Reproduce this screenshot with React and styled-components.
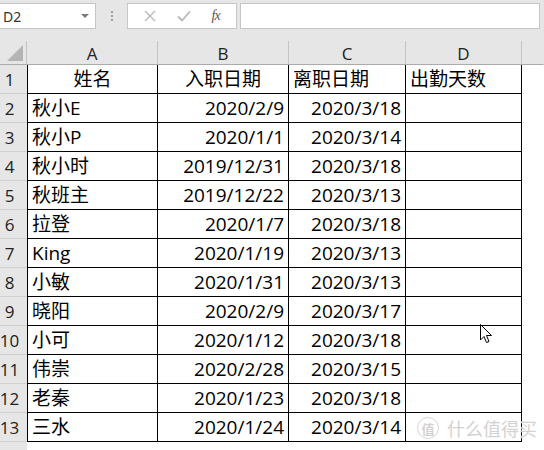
import React from 'react';
import styled, { createGlobalStyle } from 'styled-components';

const GlobalStyle = createGlobalStyle`
  html, body {
    margin: 0;
    padding: 0;
    background: #ffffff;
  }
  body {
    font-family: 'Open Sans', 'Noto Sans CJK SC', sans-serif;
  }
`;

const COLS = ['A', 'B', 'C', 'D'];

const ROWS = [
  ['秋小E', '2020/2/9', '2020/3/18'],
  ['秋小P', '2020/1/1', '2020/3/14'],
  ['秋小时', '2019/12/31', '2020/3/18'],
  ['秋班主', '2019/12/22', '2020/3/13'],
  ['拉登', '2020/1/7', '2020/3/18'],
  ['King', '2020/1/19', '2020/3/13'],
  ['小敏', '2020/1/31', '2020/3/13'],
  ['晓阳', '2020/2/9', '2020/3/17'],
  ['小可', '2020/1/12', '2020/3/18'],
  ['伟崇', '2020/2/28', '2020/3/15'],
  ['老秦', '2020/1/23', '2020/3/18'],
  ['三水', '2020/1/24', '2020/3/14'],
];

const Window = styled.div`
  position: relative;
  width: 544px;
  height: 450px;
  overflow: hidden;
  background: #ffffff;
`;

const FormulaBar = styled.div`
  display: flex;
  align-items: stretch;
  height: 26px;
  padding: 3px 4px 12px 0;
  background: #e6e6e6;
`;

const NameBox = styled.div`
  display: flex;
  align-items: center;
  justify-content: space-between;
  width: 96px;
  box-sizing: border-box;
  padding: 0 6px 0 3px;
  background: #ffffff;
  border: 1px solid #c6c6c6;
  border-left: none;
  font-family: 'Noto Sans', sans-serif;
  font-size: 14px;
  color: #333;
`;

const DropArrow = styled.span`
  width: 0;
  height: 0;
  border-left: 4px solid transparent;
  border-right: 4px solid transparent;
  border-top: 4px solid #7a7a7a;
`;

const Grip = styled.div`
  width: 31px;
  display: flex;
  flex-direction: column;
  align-items: center;
  justify-content: center;
  gap: 2px;
  & span {
    width: 2px;
    height: 2px;
    background: #a0a0a0;
  }
`;

const ToolBox = styled.div`
  display: flex;
  align-items: center;
  justify-content: space-around;
  width: 110px;
  box-sizing: border-box;
  padding: 0 6px;
  background: #ffffff;
  border: 1px solid #c6c6c6;
  margin-right: 3px;
`;

const Fx = styled.span`
  font-family: 'Liberation Serif', serif;
  font-style: italic;
  font-size: 14px;
  color: #555;
  letter-spacing: -1px;
`;

const FormulaInput = styled.div`
  flex: 1;
  background: #ffffff;
  border: 1px solid #c6c6c6;
`;

const Sheet = styled.div`
  display: grid;
  grid-template-columns: 27px 131px 131px 117px 116px 1fr;
  grid-template-rows: 24px;
  grid-auto-rows: 29px;
`;

const Corner = styled.div`
  position: relative;
  background: #e6e6e6;
  border-right: 1px solid #c4c4c4;
  border-bottom: 1px solid #ababab;
  &::after {
    content: '';
    position: absolute;
    right: 3px;
    bottom: 3px;
    width: 0;
    height: 0;
    border-left: 16px solid transparent;
    border-bottom: 16px solid #b4b4b4;
  }
`;

const ColHead = styled.div`
  display: flex;
  align-items: center;
  justify-content: center;
  padding-top: 2px;
  background: #e6e6e6;
  border-right: 1px solid ${(p) => (p.$last ? 'transparent' : '#c4c4c4')};
  border-bottom: 1px solid #ababab;
  font-family: 'Open Sans', sans-serif;
  font-size: 17px;
  color: #222;
`;

const RowHead = styled.div`
  display: flex;
  align-items: center;
  justify-content: center;
  padding-right: 8px;
  background: #e6e6e6;
  border-bottom: 1px solid #d0d0d0;
  font-family: 'Open Sans', sans-serif;
  font-size: 17px;
  color: #222;
`;

const Cell = styled.div`
  display: flex;
  align-items: center;
  justify-content: ${(p) =>
    p.$align === 'right' ? 'flex-end' : p.$align === 'center' ? 'center' : 'flex-start'};
  padding: 0 4px;
  overflow: hidden;
  white-space: nowrap;
  border-right: 1px solid #000;
  border-bottom: 1px solid #000;
  border-left: ${(p) => (p.$first ? '1px solid #000' : 'none')};
  font-family: 'Open Sans', 'Noto Sans CJK SC', sans-serif;
  font-size: 19px;
  line-height: 1;
  color: #000;
`;

const Blank = styled.div`
  background: #ffffff;
`;

const Watermark = styled.div`
  position: absolute;
  left: 417px;
  top: 417px;
  display: flex;
  align-items: center;
  gap: 8px;
  color: #d2d2d2;
  font-family: 'Noto Sans CJK SC', sans-serif;
  font-size: 18px;
  line-height: 1;
  text-shadow: 0 0 2px #fff, 0 0 1px #fff;
`;

const Badge = styled.span`
  display: flex;
  align-items: center;
  justify-content: center;
  width: 20px;
  height: 20px;
  border: 1.5px solid #d6d6d6;
  border-radius: 50%;
  font-size: 13px;
  font-weight: bold;
`;

const Pointer = styled.svg`
  position: absolute;
  left: 480px;
  top: 324px;
`;

const header = [
  ['姓名', 'center'],
  ['入职日期', 'center'],
  ['离职日期', 'left'],
  ['出勤天数', 'left'],
];

export default function App() {
  return (
    <Window>
      <GlobalStyle />
      <FormulaBar>
        <NameBox>
          D2
          <DropArrow />
        </NameBox>
        <Grip>
          <span />
          <span />
          <span />
        </Grip>
        <ToolBox>
          <svg width="12" height="12" viewBox="0 0 12 12">
            <path d="M1 1 L11 11 M11 1 L1 11" stroke="#b8b8b8" strokeWidth="1.3" fill="none" />
          </svg>
          <svg width="14" height="12" viewBox="0 0 14 12">
            <path d="M1 6.5 L5 10.5 L13 1.5" stroke="#b8b8b8" strokeWidth="1.8" fill="none" />
          </svg>
          <Fx>fx</Fx>
        </ToolBox>
        <FormulaInput />
      </FormulaBar>

      <Sheet>
        <Corner />
        {COLS.map((c) => (
          <ColHead key={c}>{c}</ColHead>
        ))}
        <ColHead $last />

        <RowHead>1</RowHead>
        {header.map(([t, a], i) => (
          <Cell key={t} $first={i === 0} $align={a}>
            {t}
          </Cell>
        ))}
        <Blank />

        {ROWS.map((r, i) => (
          <React.Fragment key={i}>
            <RowHead>{i + 2}</RowHead>
            <Cell $first>{r[0]}</Cell>
            <Cell $align="right">{r[1]}</Cell>
            <Cell $align="right">{r[2]}</Cell>
            <Cell />
            <Blank />
          </React.Fragment>
        ))}

        <RowHead />
        <Blank />
        <Blank />
        <Blank />
        <Blank />
        <Blank />
      </Sheet>

      <Watermark>
        <Badge>值</Badge>
        什么值得买
      </Watermark>

      <Pointer width="13" height="21" viewBox="0 0 13 21">
        <path
          d="M0.5 0.5 L0.5 16 L4 12.5 L6.5 18.5 L9 17.5 L6.5 11.5 L11.5 11.5 Z"
          fill="#fff"
          stroke="#000"
          strokeWidth="1"
          strokeLinejoin="miter"
        />
      </Pointer>
    </Window>
  );
}
